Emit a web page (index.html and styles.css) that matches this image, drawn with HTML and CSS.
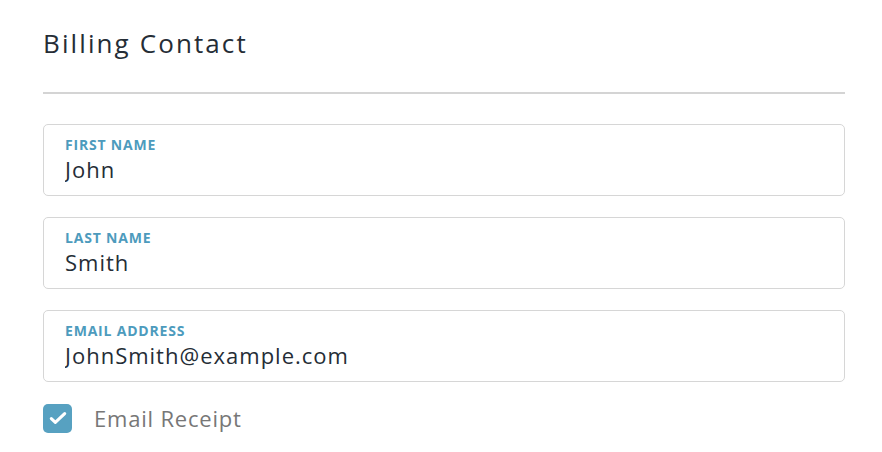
FILE: index.html
```html
<!DOCTYPE html>
<html>
<head>
    <title>Billing Contact</title>
    <link rel="stylesheet" href="styles.css">
</head>
<body>
    <div class="billing">
        <h2 class="billing-title">Billing Contact</h2>

        <div class="field">
            <label for="firstName">First Name</label>
            <input type="text" id="firstName" value="John">
        </div>

        <div class="field">
            <label for="lastName">Last Name</label>
            <input type="text" id="lastName" value="Smith">
        </div>

        <div class="field">
            <label for="email">Email Address</label>
            <input type="text" id="email" value="JohnSmith@example.com">
        </div>

        <label class="receipt">
            <span class="check">
                <svg width="20" height="20" viewBox="0 0 18 18"><path d="M3 9.5l3.6 3.4L15 5" fill="none" stroke="#fff" stroke-width="2.8" stroke-linecap="round" stroke-linejoin="round"/></svg>
            </span>
            Email Receipt
        </label>
    </div>
</body>
</html>
```

FILE: styles.css
```css
body {
    margin: 0;
    background: #fff;
    font-family: "Open Sans", sans-serif;
    color: #252d36;
}

.billing {
    width: 802px;
    margin-left: 43px;
    padding-top: 26px;
}

.billing-title {
    margin: 0;
    font-size: 26px;
    font-weight: 400;
    letter-spacing: 2.1px;
    line-height: 34px;
    padding-bottom: 32px;
    border-bottom: 2px solid #d4d4d4;
    margin-bottom: 30px;
}

.field {
    height: 70px;
    border: 1px solid #d6d6d6;
    border-radius: 5px;
    padding: 0 21px;
    margin-bottom: 21px;
}

.field label {
    display: block;
    padding-top: 11px;
    font-size: 14px;
    font-weight: 700;
    letter-spacing: 0.8px;
    text-transform: uppercase;
    color: #4d9bbd;
    line-height: 17px;
}

.field input {
    display: block;
    width: 100%;
    border: none;
    outline: none;
    padding: 0;
    margin-top: 2px;
    font-family: inherit;
    font-size: 22px;
    letter-spacing: 1px;
    line-height: 28px;
    color: #252d36;
    background: transparent;
}

.receipt {
    display: flex;
    align-items: center;
    gap: 22px;
    margin-top: 1px;
    font-size: 22px;
    letter-spacing: 0.8px;
    color: #777;
}

.check {
    width: 29px;
    height: 29px;
    border-radius: 5px;
    background: #57a1c1;
    display: flex;
    align-items: center;
    justify-content: center;
}
```
